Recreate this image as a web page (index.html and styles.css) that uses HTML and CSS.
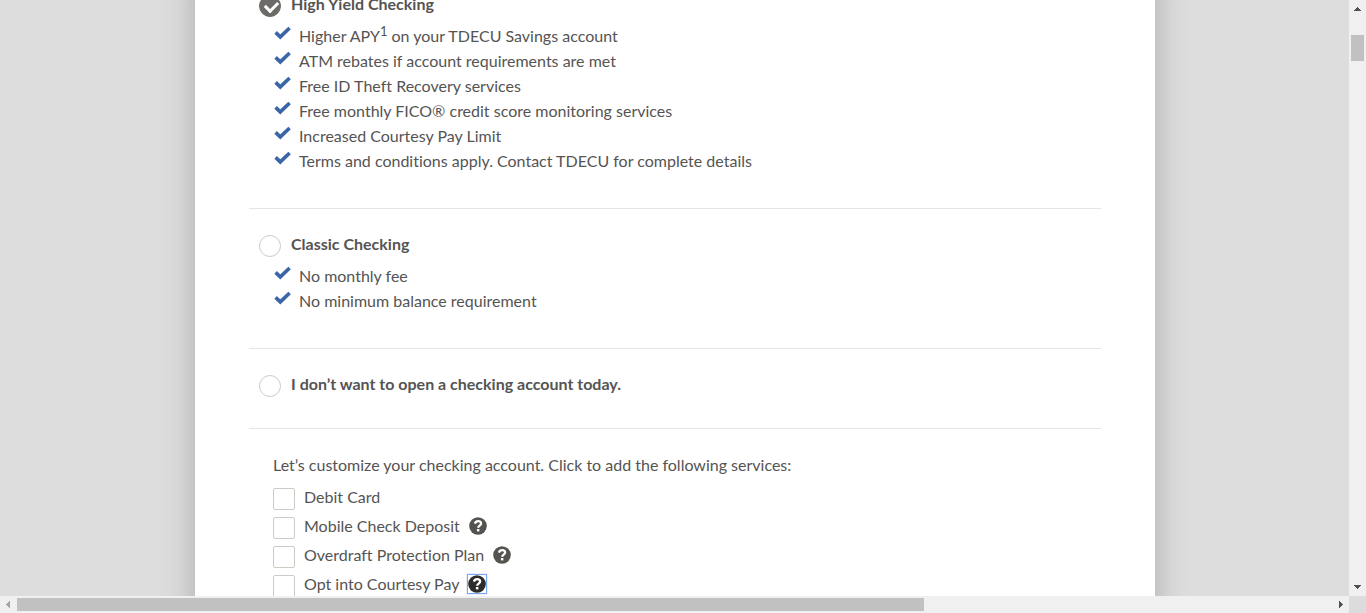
FILE: index.html
```html
<!DOCTYPE html>
<html lang="en">
<head>
<meta charset="utf-8">
<title>Checking accounts</title>
<link rel="stylesheet" href="styles.css">
</head>
<body>
<svg class="defs" aria-hidden="true">
  <symbol id="tick" viewBox="0 0 17 14"><path d="M1.6 6.4 6.3 10.9 15.6 2" fill="none" stroke="#3a66a7" stroke-width="3.6"/></symbol>
  <symbol id="help" viewBox="0 0 18 18"><circle cx="9" cy="9" r="8.8" fill="currentColor"/><path d="M5.9 6.6C6.5 4.8 7.6 4.2 9.1 4.2c1.8 0 3 1 3 2.4 0 2.1-2.9 2-2.9 4.2" fill="none" stroke="#fff" stroke-width="2.3"/><path d="M7.9 12h2.5v2.4H7.9z" fill="#fff"/></symbol>
</svg>
<div class="window">
  <main class="pane">
    <form class="card">
      <section class="account">
        <div class="choice"><input type="radio" name="account" id="high" checked><label for="high">High Yield Checking</label></div>
        <ul class="benefits">
          <li><svg class="tick"><use href="#tick"/></svg><span>Higher APY<sup>1</sup> on your TDECU Savings account</span></li>
          <li><svg class="tick"><use href="#tick"/></svg><span>ATM rebates if account requirements are met</span></li>
          <li><svg class="tick"><use href="#tick"/></svg><span>Free ID Theft Recovery services</span></li>
          <li><svg class="tick"><use href="#tick"/></svg><span>Free monthly FICO® credit score monitoring services</span></li>
          <li><svg class="tick"><use href="#tick"/></svg><span>Increased Courtesy Pay Limit</span></li>
          <li><svg class="tick"><use href="#tick"/></svg><span>Terms and conditions apply. Contact TDECU for complete details</span></li>
        </ul>
      </section>
      <section class="account">
        <div class="choice"><input type="radio" name="account" id="classic"><label for="classic">Classic Checking</label></div>
        <ul class="benefits">
          <li><svg class="tick"><use href="#tick"/></svg><span>No monthly fee</span></li>
          <li><svg class="tick"><use href="#tick"/></svg><span>No minimum balance requirement</span></li>
        </ul>
      </section>
      <section class="account">
        <div class="choice"><input type="radio" name="account" id="none"><label for="none">I don’t want to open a checking account today.</label></div>
      </section>
      <section class="services">
        <p>Let’s customize your checking account. Click to add the following services:</p>
        <div class="service"><input type="checkbox" id="debit"><label for="debit">Debit Card</label></div>
        <div class="service"><input type="checkbox" id="deposit"><label for="deposit">Mobile Check Deposit</label><button type="button" class="help" aria-label="About Mobile Check Deposit"><svg><use href="#help"/></svg></button></div>
        <div class="service"><input type="checkbox" id="overdraft"><label for="overdraft">Overdraft Protection Plan</label><button type="button" class="help" aria-label="About Overdraft Protection Plan"><svg><use href="#help"/></svg></button></div>
        <div class="service"><input type="checkbox" id="courtesy"><label for="courtesy">Opt into Courtesy Pay</label><button type="button" class="help active" aria-label="About Courtesy Pay"><svg><use href="#help"/></svg></button></div>
      </section>
    </form>
  </main>
  <div class="bar vertical" aria-hidden="true">
    <svg class="arrow" viewBox="0 0 17 17" shape-rendering="crispEdges"><path d="M8 7h1v1h1v1h1v1h1v1H5v-1h1V9h1V8h1z" fill="#505050"/></svg>
    <div class="track"><div class="thumb"></div></div>
    <svg class="arrow" viewBox="0 0 17 17" shape-rendering="crispEdges"><path d="M5 6h7v1h-1v1h-1v1H9v1H8V9H7V8H6V7H5z" fill="#505050"/></svg>
  </div>
  <div class="bar horizontal" aria-hidden="true">
    <svg class="arrow" viewBox="0 0 17 17" shape-rendering="crispEdges"><path d="M6 8h1V7h1V6h1V5h1v7H9v-1H8v-1H7V9H6z" fill="#a3a3a3"/></svg>
    <div class="track"><div class="thumb"></div></div>
    <svg class="arrow" viewBox="0 0 17 17" shape-rendering="crispEdges"><path d="M7 5h1v1h1v1h1v1h1v1h-1v1H9v1H8v1H7z" fill="#505050"/></svg>
  </div>
  <div class="corner"></div>
</div>
</body>
</html>
```
FILE: styles.css
```css
* { box-sizing: border-box; }
body {
  margin: 0;
  background: #dddddd;
  color: #555453;
  font: 16px/25px Lato, sans-serif;
  font-variant-ligatures: none;
}
.defs { position: absolute; width: 0; height: 0; }
.window {
  display: grid;
  grid-template: minmax(0, 1fr) 17px / minmax(0, 1fr) 17px;
  height: 100vh;
}
.pane {
  overflow: hidden;
  padding-left: 1px;
  background: #dddddd;
}
.card {
  max-width: 960px;
  /* the page is scrolled part-way past the first account */
  margin: -31px auto 0;
  padding: 0 54px 40px;
  background: #fff;
  box-shadow: 0 0 30px #aaa;
}
.account {
  padding: 22px 0 33px;
  border-bottom: 1px solid #e6e6e6;
}
.choice {
  display: flex;
  align-items: center;
  gap: 10px;
  height: 24px;
  padding-left: 10px;
  font-weight: 700;
}
input {
  appearance: none;
  flex: none;
  width: 22px;
  height: 22px;
  margin: 4px 0 0;
  border: 1px solid #cfcbc4;
  background: #fff;
}
input[type="radio"] { border-radius: 50%; margin-top: 6px; }
input[type="radio"]:checked {
  border-color: #6c6b67;
  background: #6c6b67;
}
input[type="radio"]:checked::after {
  content: "";
  display: block;
  width: 10px;
  height: 6px;
  margin: 5px;
  border: solid #fff;
  border-width: 0 0 3px 3px;
  transform: rotate(-45deg);
}
input[type="checkbox"] { border-radius: 2px; }
.benefits {
  margin: 8px 0 2px;
  padding: 0 0 0 25px;
  list-style: none;
}
.benefits li { display: flex; gap: 8px; height: 25px; }
.tick { flex: none; width: 17px; height: 14px; margin-top: 3px; }
sup { font-size: 13px; line-height: 0; }
.services { padding: 23px 0 0 24px; }
.services p { margin: 0 0 5px; }
.service {
  display: flex;
  align-items: center;
  height: 29px;
}
.service label { margin-left: 9px; }
.help {
  display: block;
  width: 20px;
  height: 20px;
  margin-left: 8px;
  padding: 0;
  border: 1px solid transparent;
  background: none;
  color: #54534f;
}
.help svg { display: block; width: 18px; height: 18px; }
.help.active {
  border-color: #7aa7f5;
  box-shadow: 0 0 1px #7aa7f5;
  color: #2d2c2b;
}
.bar { display: flex; background: #f0f0f0; }
.vertical { flex-direction: column; }
.arrow { flex: none; width: 17px; height: 17px; }
.track { flex: 1; min-width: 0; }
.thumb { background: #c1c1c1; }
.vertical .thumb { height: 26px; margin: 18px 2px 0; }
.horizontal .thumb { width: 69%; height: 13px; margin-top: 2px; }
.corner { background: #dcdcdc; }
```
